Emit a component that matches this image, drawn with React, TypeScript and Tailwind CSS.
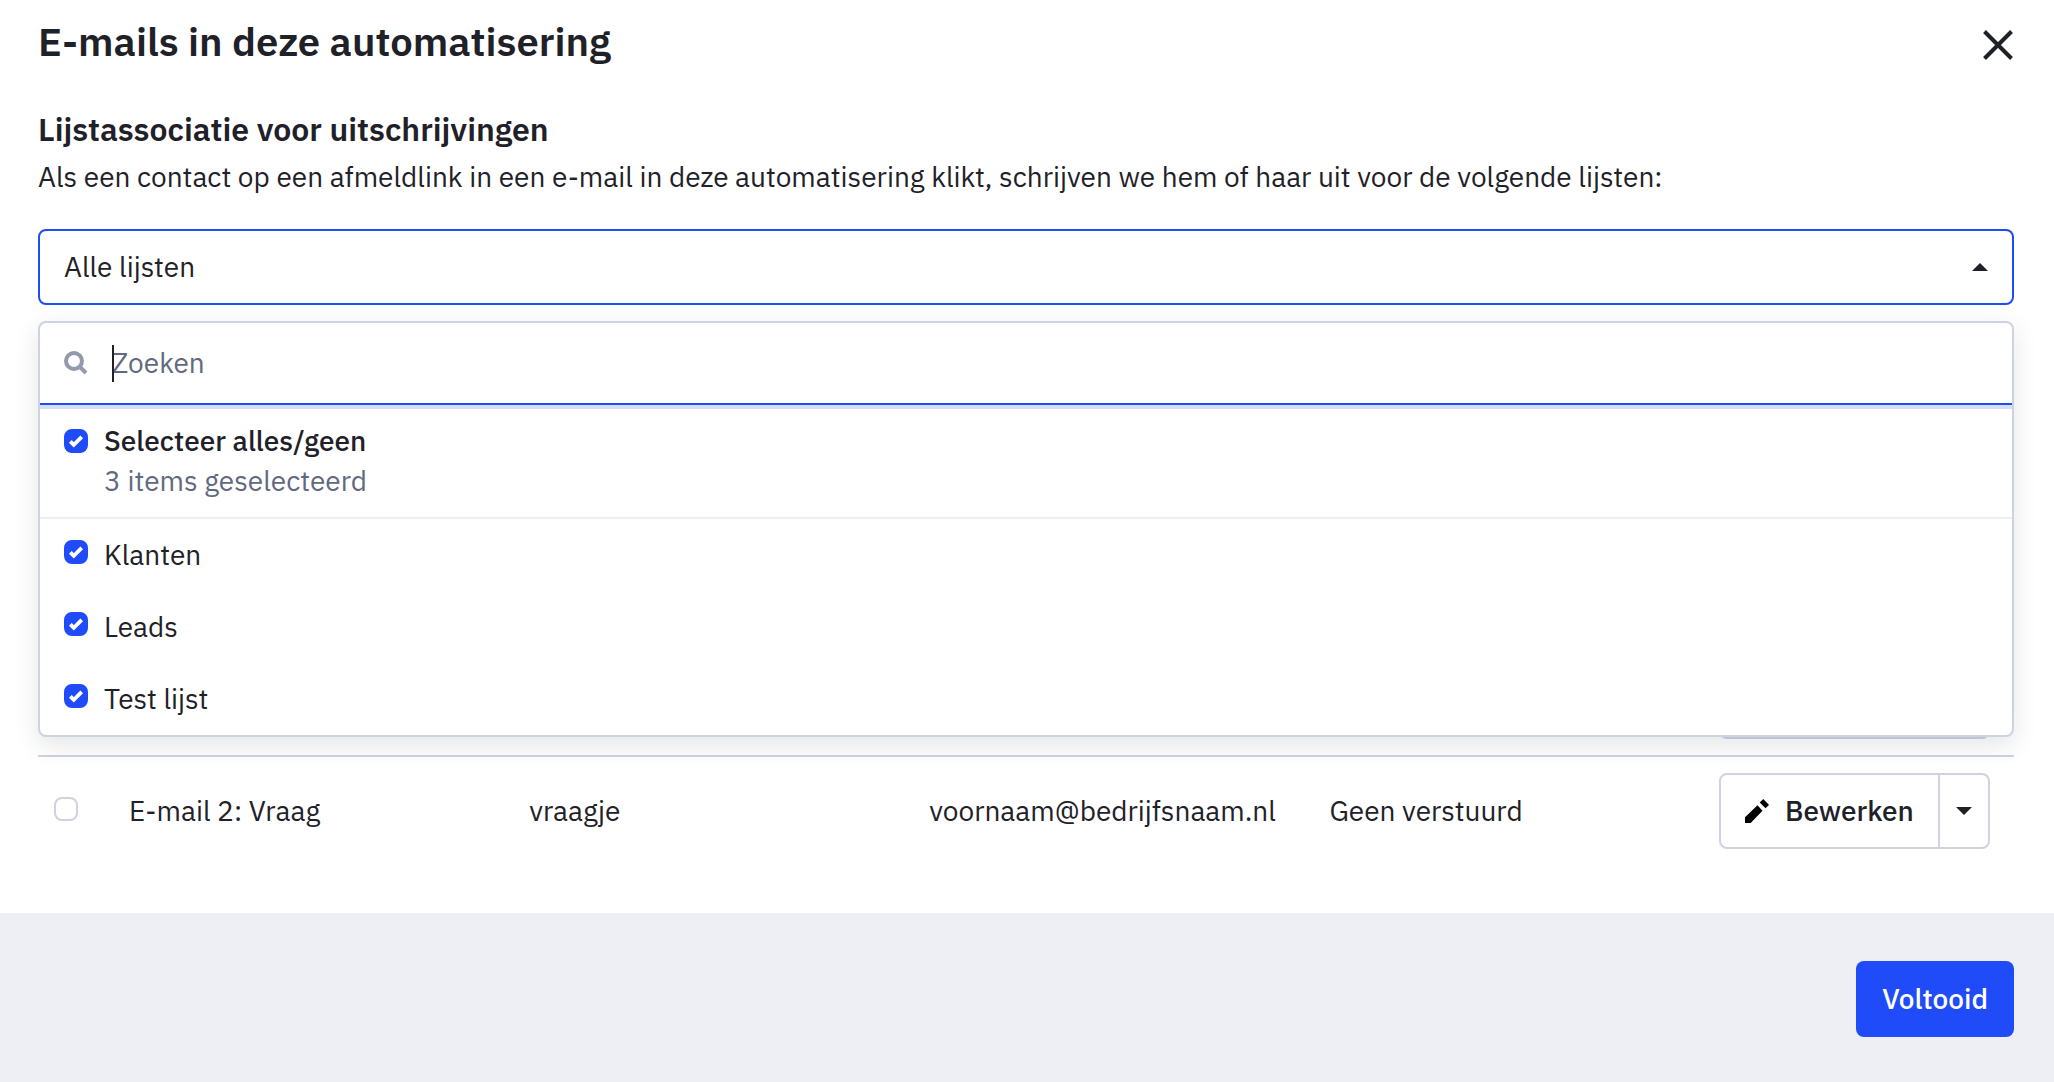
import React, { useState } from 'react';

const lists = ['Klanten', 'Leads', 'Test lijst'];

interface Email {
  name: string;
  subject: string;
  sender: string;
  status: string;
}

const emails: Email[] = [
  { name: '', subject: '', sender: '', status: '' },
  { name: 'E-mail 2: Vraag', subject: 'vraagje', sender: 'voornaam@bedrijfsnaam.nl', status: 'Geen verstuurd' },
];

interface CheckboxProps {
  id: string;
  checked: boolean;
  onChange: () => void;
  label?: string;
}

const Checkbox: React.FC<CheckboxProps> = ({ id, checked, onChange, label }) => (
  <span className="relative block size-6 shrink-0">
    <input
      type="checkbox"
      id={id}
      aria-label={label}
      checked={checked}
      onChange={onChange}
      className="block size-6 appearance-none rounded-lg border-2 border-[#cfd2e1] bg-white checked:border-[#1f4bf9] checked:bg-[#1f4bf9]"
    />
    {checked && (
      <svg viewBox="0 0 24 24" className="pointer-events-none absolute inset-0 size-6" fill="none" aria-hidden="true">
        <path d="M6.3 12.3l3.5 3.5 7.900-7.900" stroke="#fff" strokeWidth="3.800" />
      </svg>
    )}
  </span>
);

const Caret: React.FC<{ up?: boolean }> = ({ up }) => (
  <svg viewBox="0 0 16 8" className="h-2 w-4" fill="#1f2129" aria-hidden="true">
    <path d={up ? 'M0 8L8 0l8 8z' : 'M0 0h16L8 8z'} />
  </svg>
);

const EditButtons: React.FC = () => (
  <div className="ml-auto flex h-[76px] w-[271px] rounded-lg border-2 border-[#cfd2e1] bg-white">
    <button type="button" className="flex flex-1 items-center gap-4 pl-6 font-medium">
      <svg viewBox="0 0 24 24" className="size-6" fill="#000" aria-hidden="true">
        <path d="M0 24v-5.700l12.500-12 5 5.400L5.700 24zM14.700 3.500L18.300 0 24 5.900l-3.500 3.400z" />
      </svg>
      Bewerken
    </button>
    <button
      type="button"
      aria-label="Meer acties"
      className="flex w-[50px] items-center justify-center border-l-2 border-[#cfd2e1]"
    >
      <Caret />
    </button>
  </div>
);

const App: React.FC = () => {
  const [selected, setSelected] = useState<string[]>(lists);
  const [picked, setPicked] = useState<string[]>([]);
  const [query, setQuery] = useState('');
  const [isOpen, setIsOpen] = useState(true);

  const toggle = (items: string[], item: string) =>
    items.includes(item) ? items.filter((i) => i !== item) : [...items, item];

  const allSelected = selected.length === lists.length;
  const visible = lists.filter((l) => l.toLowerCase().includes(query.toLowerCase()));

  return (
    <div className="flex min-h-screen flex-col bg-white font-['IBM_Plex_Sans',Roboto,sans-serif] text-[28px] leading-10 text-[#1f2129]">
      <header className="flex items-start justify-between pt-4 pr-10 pl-[38px]">
        <h1 className="text-[40px] leading-[50px] font-semibold">E-mails in deze automatisering</h1>
        <button type="button" aria-label="Sluiten" className="mt-[13px]">
          <svg viewBox="0 0 32 32" className="size-8" fill="none" stroke="#1f2129" strokeWidth="4" aria-hidden="true">
            <path d="M2.5 2.5l27 27M29.5 2.5l-27 27" />
          </svg>
        </button>
      </header>

      <main className="pt-[43px] pr-10 pb-12 pl-[38px]">
        <h2 className="text-[32px] leading-10 font-semibold">Lijstassociatie voor uitschrijvingen</h2>
        <p className="mt-2">
          Als een contact op een afmeldlink in een e-mail in deze automatisering klikt, schrijven we hem of haar uit voor
          de volgende lijsten:
        </p>

        <div className="relative mt-8">
          <button
            type="button"
            aria-expanded={isOpen}
            onClick={() => setIsOpen(!isOpen)}
            className="flex h-[76px] w-full items-center justify-between rounded-lg border-2 border-[#1f4bf9] bg-white px-6"
          >
            Alle lijsten
            <Caret up={isOpen} />
          </button>

          {isOpen && (
            <div className="absolute inset-x-0 top-full z-10 mt-4 overflow-hidden rounded-lg border-2 border-[#cfd2e1] bg-white shadow-[0_8px_24px_rgba(30,40,40,0.12)]">
              <div className="relative flex h-[82px] items-center border-b-2 border-[#1f4bf9] pl-6 shadow-[0_4px_0_#d2defc]">
                <svg viewBox="0 0 24 24" className="size-6" fill="none" stroke="#9599ad" strokeWidth="4" aria-hidden="true">
                  <circle cx="10" cy="10" r="8" />
                  <path d="M15.5 15.5l6.5 6.5" />
                </svg>
                <input
                  type="text"
                  aria-label="Zoeken"
                  placeholder="Zoeken"
                  value={query}
                  onChange={(e) => setQuery(e.target.value)}
                  className="ml-6 h-10 flex-1 caret-transparent outline-none placeholder:text-[#626880]"
                />
                <span className="absolute top-[22px] left-[72px] h-[37px] w-0.5 bg-[#1f2129]" />
              </div>

              <div className="flex gap-4 border-b-2 border-[#eeeff5] px-6 py-4">
                <div className="pt-2">
                  <Checkbox id="all" checked={allSelected} onChange={() => setSelected(allSelected ? [] : lists)} />
                </div>
                <label htmlFor="all" className="flex flex-col">
                  <span className="font-medium">Selecteer alles/geen</span>
                  <span className="text-[#626880]">{selected.length} items geselecteerd</span>
                </label>
              </div>

              <ul>
                {visible.map((list) => (
                  <li key={list} className="flex gap-4 px-6 py-4">
                    <div className="pt-[5px]">
                      <Checkbox
                        id={list}
                        checked={selected.includes(list)}
                        onChange={() => setSelected(toggle(selected, list))}
                      />
                    </div>
                    <label htmlFor={list}>{list}</label>
                  </li>
                ))}
              </ul>
            </div>
          )}
        </div>

        <table className="mt-[342px] w-full table-fixed border-collapse text-left">
          <colgroup>
            <col className="w-[67px]" />
            <col className="w-[20.25%]" />
            <col className="w-[20.25%]" />
            <col className="w-[20.25%]" />
            <col className="w-[20.25%]" />
            <col />
          </colgroup>
          <tbody>
            {emails.map((email, i) => (
              <tr key={i} className="border-b-2 border-[#cfd2e1] last:border-b-0">
                <td className="pb-1 pl-4">
                  <Checkbox
                    id={`email-${i}`}
                    label={email.name || 'E-mail'}
                    checked={picked.includes(email.name)}
                    onChange={() => setPicked(toggle(picked, email.name))}
                  />
                </td>
                <td className="px-6">{email.name}</td>
                <td className="px-6">{email.subject}</td>
                <td className="px-6 whitespace-nowrap">{email.sender}</td>
                <td className="px-6">{email.status}</td>
                <td className="py-4 pr-6">
                  <EditButtons />
                </td>
              </tr>
            ))}
          </tbody>
        </table>
      </main>

      <footer className="flex flex-1 items-start justify-end bg-[#eeeff5] py-12 pr-10">
        <button type="button" className="h-[76px] rounded-lg bg-[#1f4bf9] px-[26px] font-medium text-white">
          Voltooid
        </button>
      </footer>
    </div>
  );
};

export default App;
